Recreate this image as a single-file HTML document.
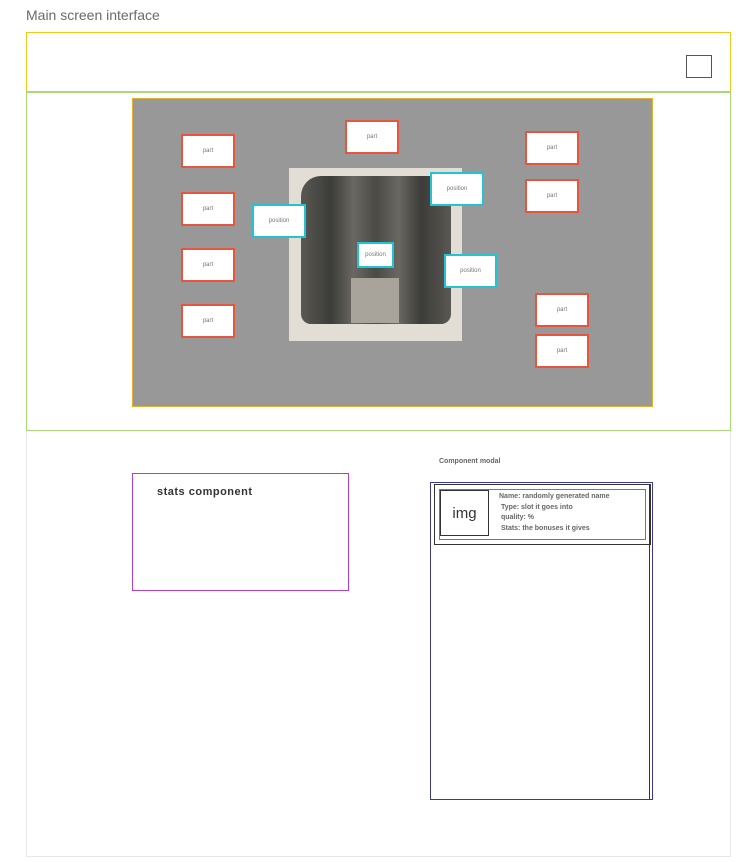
<!DOCTYPE html>
<html><head><style>
body{margin:0;width:745px;height:862px;background:#fff;font-family:"Liberation Sans",sans-serif;position:relative;overflow:hidden}
.a{position:absolute;box-sizing:border-box}
.p{border:2px solid #e8553c;background:#fff;width:54px;height:34px;font-size:6px;color:#777;display:flex;align-items:center;justify-content:center}
.q{border:2px solid #22c3d3;background:#fff;width:54px;height:34px;font-size:6px;color:#777;display:flex;align-items:center;justify-content:center}
</style></head><body>
<div class="a" style="left:26px;top:7px;font-size:14px;color:#6a6a6a">Main screen interface</div>
<div class="a" style="left:26px;top:430px;width:705px;height:427px;border:1px solid #e6e6e6"></div>
<div class="a" style="left:26px;top:32px;width:705px;height:60px;border:1px solid #f5c518"></div>
<div class="a" style="left:686px;top:55px;width:26px;height:23px;border:1.5px solid #555"></div>
<div class="a" style="left:26px;top:92px;width:705px;height:339px;border:1px solid #a8d878"></div>
<div class="a" style="left:132px;top:98px;width:521px;height:309px;background:#989898;border:1px solid #e0b030"></div>
<div class="a" style="left:289px;top:168px;width:173px;height:173px;background:#e2ddd5;overflow:hidden">
 <div class="a" style="left:12px;top:8px;width:150px;height:148px;background:linear-gradient(90deg,#5a5852,#3c3c3a 20%,#6a6862 35%,#4a4a46 50%,#6a6862 65%,#3c3c3a 80%,#5a5852);border-radius:20px 20px 10px 10px"></div>
 <div class="a" style="left:62px;top:110px;width:48px;height:45px;background:#a8a49c"></div>
</div>
<div class="a p" style="left:181px;top:134px">part</div>
<div class="a p" style="left:345px;top:120px">part</div>
<div class="a p" style="left:525px;top:131px">part</div>
<div class="a p" style="left:181px;top:192px">part</div>
<div class="a p" style="left:525px;top:179px">part</div>
<div class="a p" style="left:181px;top:248px">part</div>
<div class="a p" style="left:181px;top:304px">part</div>
<div class="a p" style="left:535px;top:293px">part</div>
<div class="a p" style="left:535px;top:334px">part</div>
<div class="a q" style="left:252px;top:204px">position</div>
<div class="a q" style="left:430px;top:172px">position</div>
<div class="a q" style="left:357px;top:242px;width:37px;height:26px">position</div>
<div class="a q" style="left:444px;top:254px;width:53px">position</div>
<div class="a" style="left:132px;top:473px;width:217px;height:118px;border:1px solid #b040c8"></div>
<div class="a" style="left:157px;top:486px;font-size:11px;font-weight:bold;color:#333;letter-spacing:.5px">stats component</div>
<div class="a" style="left:439px;top:458px;font-size:7px;font-weight:bold;color:#666">Component modal</div>
<div class="a" style="left:430px;top:482px;width:223px;height:318px;border:1px solid #3a3a90"></div>
<div class="a" style="left:434px;top:485px;width:216px;height:314px;border-right:1px solid #333"></div>
<div class="a" style="left:434px;top:484px;width:217px;height:61px;border:1px solid #333"></div>
<div class="a" style="left:439px;top:489px;width:207px;height:51px;border:1.5px solid #20a090"></div>
<div class="a" style="left:440px;top:490px;width:49px;height:46px;border:1px solid #333;font-size:15px;color:#333;display:flex;align-items:center;justify-content:center">img</div>
<div class="a" style="left:499px;top:492px;font-size:7px;font-weight:bold;color:#666;line-height:10.5px">Name: randomly generated name<br>&nbsp;Type: slot it goes into<br>&nbsp;quality: %<br>&nbsp;Stats: the bonuses it gives</div>
</body></html>
